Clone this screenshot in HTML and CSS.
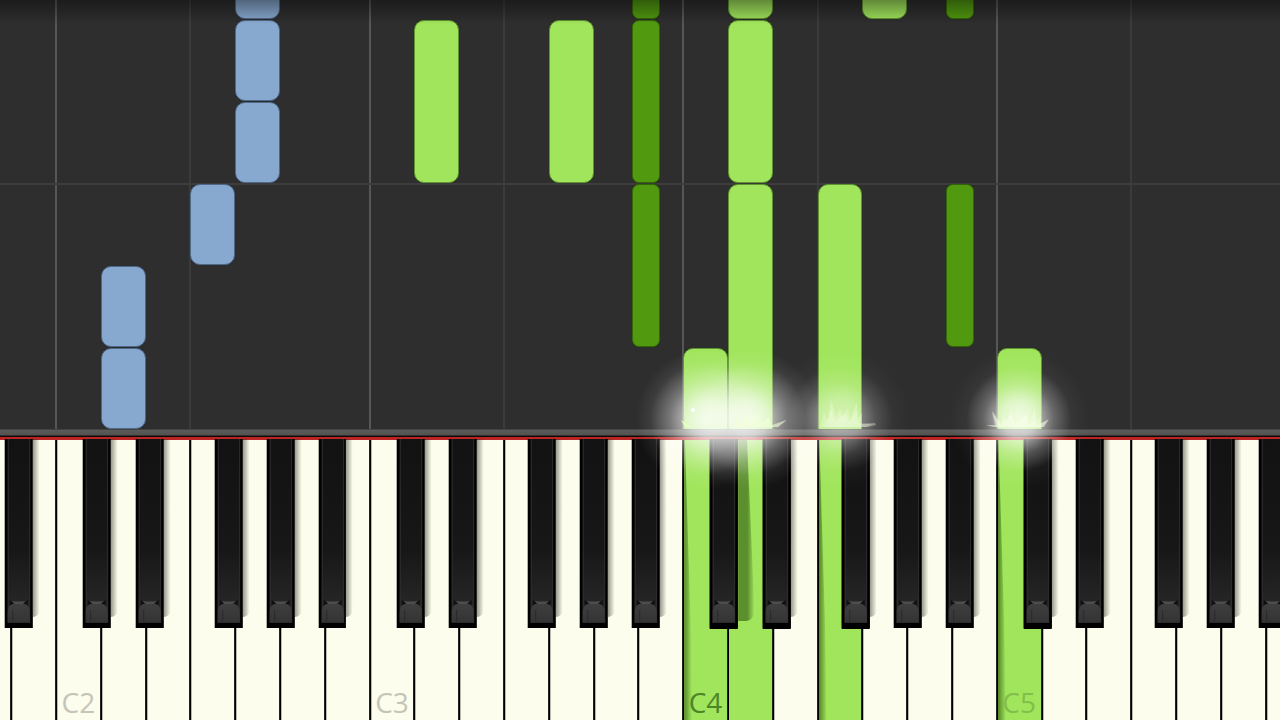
FILE: index.html
```
<!DOCTYPE html>
<html lang="en">
  <head>
    <meta charset="UTF-8">
    <title>Piano Roll</title>
    <link rel="stylesheet" href="styles.css">
  </head>
  <body>
    <svg class="defs" aria-hidden="true">
      <defs>
        <linearGradient id="ebony" x1="0" y1="0" x2="0" y2="1">
          <stop offset="0" stop-color="#121212"/>
          <stop offset="0.6" stop-color="#171717"/>
          <stop offset="1" stop-color="#2b2b2b"/>
        </linearGradient>
        <linearGradient id="front" x1="0" y1="0" x2="0" y2="1">
          <stop offset="0" stop-color="#3e3e3e"/>
          <stop offset="1" stop-color="#343434"/>
        </linearGradient>
        <symbol id="black-key" viewBox="0 0 28 189" preserveAspectRatio="none">
          <rect width="28" height="189" fill="#000"/>
          <rect x="3" y="0" width="22" height="184" fill="url(#ebony)"/>
          <path d="M3.5 0V184M25 0V184" stroke="#303034" stroke-width="1"/>
          <path d="M5 161L9 164L5 167ZM23 161L19 164L23 167Z" fill="#101010"/>
          <path d="M7 162Q14 163 21 162L18 165H10Z" fill="#4e4e4e"/>
          <path d="M3 183V172Q4 165 9 165H19Q24 165 25 172V183Z" fill="url(#front)"/>
          <path d="M8 171V183" stroke="#292929"/>
        </symbol>
        <symbol id="spark-both" viewBox="0 0 72 34">
          <path d="M10 31L3 29L13 29L9 15L18 27L21 18L24 27L28 12L31 25L36 15L38 25L45 13L46 26L52 13L52 27L58 20L57 28L66 23L61 31Z" fill="#f4ffd9" fill-opacity="0.45"/>
          <path d="M12 31L9 16L18 29L28 18L32 28L43 19L46 29L54 20L53 29L65 24L60 31Z" fill="#fff" fill-opacity="0.3"/>
        </symbol>
        <symbol id="spark-left" viewBox="0 0 72 34">
          <path d="M15 31L11 24L18 28L22 31Z" fill="#e6ffc0" fill-opacity="0.8"/>
          <circle cx="23" cy="14" r="2" fill="#fff"/>
        </symbol>
        <symbol id="spark-right" viewBox="0 0 72 34">
          <path d="M18 31L23 20L27 27L33 17L37 27L44 16L48 27L55 21L58 29L73 24L64 31Z" fill="#f4ffd9" fill-opacity="0.6"/>
        </symbol>
        <symbol id="spark-mid" viewBox="0 0 72 34">
          <path d="M16 31L20 16L24 25L27 3L32 21L36 13L39 21L44 12L46 23L53 6L53 23L58 17L58 28L71 27L72 29L64 31Z" fill="#f4ffd9" fill-opacity="0.35"/>
          <path d="M20 31L24 22L27 14L32 26L41 16L45 26L53 15L55 27L68 28L62 31Z" fill="#fff" fill-opacity="0.25"/>
        </symbol>
      </defs>
    </svg>

    <main class="scene">
      <div class="roll" id="roll"></div>
      <div class="rail"></div>
      <div class="keyboard" id="keyboard"></div>
      <div class="glows" id="glows"></div>
    </main>

    <script>
    // key 0 is A1, every white key is 3.5% of the window wide
    var KEY_W=3.5;
    var KEY_START=-2.625;
    var KEY_COUNT=30;
    var BEAT=82;
    var names=["A", "B", "C", "D", "E", "F", "G"];
    // where the sharp sits on its white key
    var sharps={A:0.86, C:0.61, D:0.78, F:0.54, G:0.7};
    var pressed=[16, 17, 19, 23];
    var glows=[
      [16, "strong", "spark-left"], [17, "strong", "spark-right"],
      [19, "soft", "spark-mid"], [23, "medium", "spark-both"]
    ];

    // key, first beat, beats, colour
    var notes=[
      [3, 0, 1, "left"], [3, 1, 1, "left"], [5, 2, 1, "left"],
      [6, 3, 1, "left"], [6, 4, 1, "left"], [6, 5, 1, "left"],
      [10, 3, 2, "right"], [13, 3, 2, "right"],
      [14, 1, 2, "sharp"], [14, 3, 2, "sharp"], [14, 5, 2, "sharp"],
      [16, -1, 2, "right"],
      [17, -1, 4, "right"], [17, 3, 2, "right"], [17, 5, 2, "right"],
      [19, -1, 4, "right"], [20, 5, 2, "right"],
      [21, 1, 2, "sharp"], [21, 5, 2, "sharp"],
      [23, -1, 2, "right"]
    ];

    var roll=document.getElementById("roll");
    var keyboard=document.getElementById("keyboard");
    var glowLayer=document.getElementById("glows");

    function keyX(i) {
      return KEY_START+i*KEY_W;
    }
    function isPressed(i) {
      return pressed.indexOf(i)>=0;
    }
    function add(parent, tag, cls) {
      var elem=document.createElement(tag);
      elem.className=cls;
      parent.appendChild(elem);
      return elem;
    }

    for(var i=0; i<KEY_COUNT; i++) {
      var name=names[i%7];
      var octave=Math.floor((i+5)/7)+1;
      if(name=="C" || name=="F") {
        var line=add(roll, "div", "line line-"+name.toLowerCase());
        line.style.left=keyX(i)+"%";
      }

      var slot=add(keyboard, "div", "slot");
      var key=add(slot, "button", "key");
      key.type="button";
      key.setAttribute("aria-label", name+octave);
      if(isPressed(i)) key.className+=" pressed";
      if(isPressed(i) && !isPressed(i-1)) key.className+=" shaded";
      if(name=="C") {
        var label=add(key, "span", "label");
        label.textContent=name+octave;
        if(octave==4) label.className+=" middle";
      }

      if(sharps[name]) {
        var black=add(slot, "button", "black");
        black.type="button";
        black.setAttribute("aria-label", name+"#"+octave);
        black.style.left=sharps[name]*100+"%";
        if(isPressed(i)) black.className+=" low";
        if(isPressed(i) && isPressed(i+1)) black.className+=" deep";
        black.innerHTML='<svg><use href="#black-key"/></svg>';
      }
    }
    add(roll, "div", "bar-line");

    notes.forEach(function(n) {
      var note=add(roll, "div", "note "+n[3]);
      var x=n[3]=="sharp" ? keyX(n[0]+sharps[names[n[0]%7]]) : keyX(n[0]);
      note.style.left=x+"%";
      note.style.bottom=(n[1]*BEAT)+"px";
      note.style.height=(n[2]*BEAT-1)+"px";
    });

    glows.forEach(function(g) {
      var glow=add(glowLayer, "div", "glow "+g[1]);
      glow.style.left=keyX(g[0]+0.5)+"%";
      glow.innerHTML='<svg class="spark"><use href="#'+g[2]+'"/></svg>';
    });
    </script>
  </body>
</html>
```
FILE: styles.css
```
body {
  margin:0;
  background-color:#2e2e2e;
  font-family:"Open Sans", "Noto Sans", sans-serif;
}
.defs {
  position:absolute;
  width:0;
  height:0;
}
.scene {
  position:relative;
  display:flex;
  flex-direction:column;
  min-height:100vh;
  overflow:hidden;
}
.roll {
  position:relative;
  flex:1;
  overflow:hidden;
  background-color:#2e2e2e;
}
.roll::after {
  content:"";
  position:absolute;
  left:0;
  right:0;
  top:0;
  height:24px;
  background:linear-gradient(rgba(0,0,0,0.4), rgba(0,0,0,0));
}
.line {
  position:absolute;
  top:0;
  bottom:0;
  width:2px;
  margin-left:-1px;
}
.line-c {
  background-color:#565656;
}
.line-f {
  background-color:#3b3b3b;
}
.bar-line {
  position:absolute;
  left:0;
  right:0;
  bottom:244px;
  height:2px;
  background-color:#3d3d3d;
}
.note {
  position:absolute;
  box-sizing:border-box;
  width:3.5%;
  border:1px solid;
  border-radius:10px;
}
.left {
  border-color:#4f6888;
  background-color:#88a9cf;
  box-shadow:0 0 1px 0 #1b2836;
}
.right {
  border-color:#5f9330;
  background-color:#a1e55c;
  box-shadow:0 0 1px 0 #203510;
}
.sharp {
  width:2.1875%;
  border-color:#336607;
  border-radius:7px;
  background-color:#519a10;
  box-shadow:0 0 1px 0 #203510;
}

.rail {
  height:11px;
  background:linear-gradient(#2a2a2a 0, #5b5b59 1px, #525250 6px, #151010 7px, #100000 8px, #b82222 8px, #c12626 11px);
}
.keyboard {
  display:flex;
  height:280px;
  margin-left:-2.625%;
  width:100%;
}
.slot {
  position:relative;
  flex:0 0 3.5vw;
}
.key {
  position:relative;
  display:flex;
  align-items:flex-end;
  justify-content:center;
  width:100%;
  height:100%;
  padding:0;
  border:0;
  border-left:1px solid #000;
  border-right:1px solid #222;
  background-color:#fcfdec;
  box-shadow:inset 1px 0 0 #b9baad;
  font-family:inherit;
}
.label {
  position:relative;
  font-size:28px;
  font-weight:400;
  line-height:36px;
  color:#c4c5b8;
}
.pressed {
  background-color:#a1e55c;
  box-shadow:none;
}
.shaded::before {
  content:"";
  position:absolute;
  left:0;
  top:0;
  bottom:0;
  width:8px;
  background:linear-gradient(90deg, rgba(35,70,10,0.6), rgba(60,110,20,0.4) 50%, rgba(60,110,20,0));
  clip-path:polygon(0 0, 10% 0, 80% 65%, 100% 100%, 0 100%);
}
.pressed .label {
  color:#82be49;
}
.pressed .middle {
  color:#4c8428;
}
.black {
  position:absolute;
  z-index:2;
  top:-1px;
  width:62.5%;
  height:189px;
  padding:0;
  border:0;
  background-color:#000;
  transform:translateX(-1%);
}
.black::before {
  content:"";
  position:absolute;
  z-index:-1;
  left:100%;
  top:0;
  width:7px;
  height:178px;
  border-radius:0 0 7px 0;
  background:linear-gradient(90deg, rgba(50,50,40,0.5), rgba(60,60,50,0));
}
.black svg {
  display:block;
  width:100%;
  height:100%;
}
.low {
  box-shadow:0 1px 0 #000;
}
.deep::before {
  width:16px;
  height:182px;
  border-radius:0 0 8px 0;
  background:linear-gradient(90deg, rgba(45,85,15,0.6) 60%, rgba(60,110,20,0.1));
  clip-path:polygon(0 0, 55% 0, 100% 90%, 100% 100%, 0 100%);
}

.glows {
  position:absolute;
  z-index:3;
  left:0;
  right:0;
  bottom:291px;
  height:0;
  pointer-events:none;
}
.glow {
  position:absolute;
  top:-80px;
  width:140px;
  height:140px;
  margin-left:-70px;
}
.strong {
  background:radial-gradient(closest-side, rgba(255,255,255,0.85), rgba(255,255,255,0.7) 25%, rgba(255,255,255,0.35) 52%, rgba(255,255,255,0.07) 80%, rgba(255,255,255,0));
}
.medium {
  background:radial-gradient(closest-side, rgba(255,255,255,0.85), rgba(255,255,255,0.68) 25%, rgba(255,255,255,0.28) 50%, rgba(255,255,255,0.04) 75%, rgba(255,255,255,0));
}
.soft {
  background:radial-gradient(closest-side, rgba(255,255,255,0.55), rgba(255,255,255,0.42) 28%, rgba(255,255,255,0.17) 52%, rgba(255,255,255,0.03) 75%, rgba(255,255,255,0));
}
.spark {
  position:absolute;
  left:34px;
  top:47px;
  width:72px;
  height:34px;
  overflow:visible;
}
```
